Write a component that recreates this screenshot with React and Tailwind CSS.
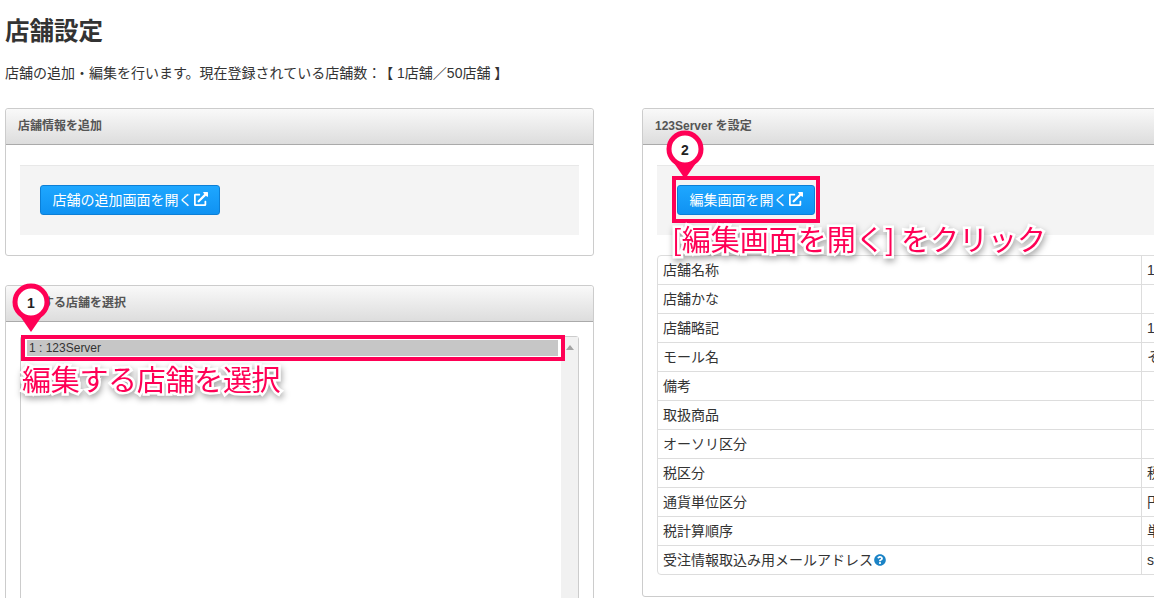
import { FaExternalLinkAlt, FaQuestionCircle } from 'react-icons/fa'

const ROWS = [
  ['店舗名称', '123Server'],
  ['店舗かな', ''],
  ['店舗略記', '123'],
  ['モール名', 'その他'],
  ['備考', ''],
  ['取扱商品', ''],
  ['オーソリ区分', ''],
  ['税区分', '税込'],
  ['通貨単位区分', '円'],
  ['税計算順序', '単一'],
]

export default function App() {
  return (
    <div className="relative h-[598px] w-[1154px] overflow-hidden bg-white pl-[5px] text-[#333] font-['Liberation_Sans','Noto_Sans_CJK_JP',sans-serif]">
      <h1 className="mt-[17px] h-[30px] text-[24.5px] font-bold leading-[30px]">店舗設定</h1>
      <p className="mt-[16px] h-[20px] text-[14px] leading-[20px]">
        店舗の追加・編集を行います。現在登録されている店舗数：<span className="ml-[5px]">【 1店舗／50店舗 】</span>
      </p>

      <div className="mt-[25px] flex w-[1227px] items-start gap-[48px]">
        <div className="w-[589px] shrink-0">
          <Panel title="店舗情報を追加">
            <div className="px-[14px] pt-[20px] pb-[20px]">
              <Well>
                <OpenButton className="w-[180px]">店舗の追加画面を開く</OpenButton>
              </Well>
            </div>
          </Panel>

          <div className="mt-[29px]">
            <Panel title="編集する店舗を選択">
              <div className="h-[300px] px-[14px] pt-[14px]">
                <div className="flex h-[290px] rounded-[3px] border border-[#ccc]">
                  <div className="flex-1 pt-[3px] pr-[3px] pl-[6px]">
                    <div className="h-[16px] bg-[#c6c6c6] pl-[2px] text-[12px] leading-[16px]">1 : 123Server</div>
                  </div>
                  <div className="flex w-[17px] justify-center bg-[#f1f1f1] pt-[8px]">
                    <div className="h-0 w-0 border-x-[4px] border-b-[5px] border-x-transparent border-b-[#a3a3a3]" />
                  </div>
                </div>
              </div>
            </Panel>
          </div>
        </div>

        <div className="w-[589px] shrink-0">
          <Panel title="123Server を設定">
            <div className="px-[14px] pt-[20px] pb-[21px]">
              <Well>
                <OpenButton className="w-[138px]">編集画面を開く</OpenButton>
              </Well>
              <table className="mt-[20px] w-full table-fixed border-separate border-spacing-0 rounded-[4px] border border-[#ddd] text-[14px] leading-[28px]">
                <tbody>
                  {ROWS.map(([label, value]) => (
                    <tr key={label} className="h-[29px]">
                      <td className="w-[483px] border-b border-[#ddd] pl-[5px]">{label}</td>
                      <td className="border-b border-l border-[#ddd] pl-[5px]">{value}</td>
                    </tr>
                  ))}
                  <tr className="h-[28px]">
                    <td className="pl-[5px]">
                      <span className="inline-flex items-center gap-[1px]">
                        受注情報取込み用メールアドレス
                        <FaQuestionCircle className="text-[12px] text-[#1a83c6]" />
                      </span>
                    </td>
                    <td className="border-l border-[#ddd] pl-[5px]">sample@example.com</td>
                  </tr>
                </tbody>
              </table>
            </div>
          </Panel>
        </div>
      </div>

      {/* annotations drawn over the screenshot */}
      <div className="absolute left-[21px] top-[335px] h-[26px] w-[544px] border-[4px] border-[#ff0055]" />
      <div className="absolute left-[672px] top-[176px] h-[47px] w-[148px] border-[4px] border-[#ff0055]" />
      <Pin className="absolute left-[12px] top-[283px]" n="1" />
      <Pin className="absolute left-[666px] top-[130px]" n="2" />
      <Note className="left-[22px] top-[357px] tracking-[-0.3px]">編集する店舗を選択</Note>
      <Note className="left-[672px] top-[217px]">[編集画面を開く] をクリック</Note>
    </div>
  )
}

function Panel({ title, children }) {
  return (
    <section className="rounded-[3px] border border-[#ccc] bg-white">
      <h2 className="h-[36px] rounded-t-[3px] border-b border-[#aaa] bg-gradient-to-b from-[#f9f9f9] to-[#dddddd] pl-[12px] text-[12px] font-bold leading-[35px] text-[#555]">
        {title}
      </h2>
      {children}
    </section>
  )
}

function Well({ children }) {
  return <div className="h-[70px] border-t border-[#e8e8e8] bg-[#f4f4f4] px-[20px] pt-[19px]">{children}</div>
}

function OpenButton({ className, children }) {
  return (
    <button className={`flex h-[30px] items-center justify-center gap-[1px] rounded-[3px] border border-[#0c7fd6] bg-gradient-to-b from-[#1ea7ff] to-[#0f92f2] text-[14px] text-white ${className}`}>
      {children}
      <FaExternalLinkAlt className="mb-[2px] text-[14px]" />
    </button>
  )
}

function Pin({ n, className }) {
  return (
    <svg className={className} width="38" height="50" viewBox="0 0 38 50">
      <path d="M8 33 L19 49 L30 33 Z" fill="#ff0055" />
      <circle cx="19" cy="19" r="16" fill="#fff" stroke="#ff0055" strokeWidth="5" />
      <text x="19" y="24.5" textAnchor="middle" fontSize="14" fontWeight="700" fill="#222">{n}</text>
    </svg>
  )
}

function Note({ className, children }) {
  return (
    <div
      className={`absolute whitespace-nowrap text-[29px] leading-[42px] text-[#ff0055] [-webkit-text-stroke:5px_#fff] [paint-order:stroke_fill] drop-shadow-[1px_3px_3px_rgba(0,0,0,0.35)] font-['Noto_Sans_CJK_JP',sans-serif] ${className}`}
    >
      {children}
    </div>
  )
}
